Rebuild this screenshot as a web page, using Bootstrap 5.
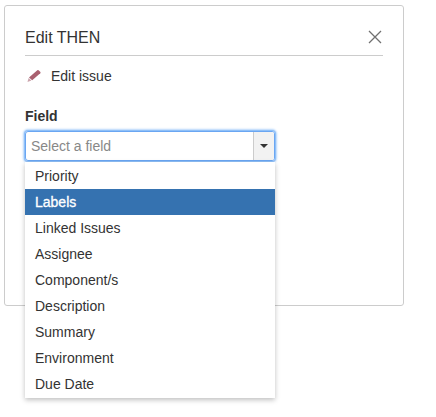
<!DOCTYPE html>
<html lang="en">
<head>
    <meta charset="UTF-8">
    <meta name="viewport" content="width=device-width, initial-scale=1.0">
    <title>Edit THEN</title>
    <link href="https://cdn.jsdelivr.net/npm/bootstrap@5.3.0/dist/css/bootstrap.min.css" rel="stylesheet">
    <style>
        body {
            background-color: #fff;
            color: #333;
            font-family: "Liberation Sans", Arial, sans-serif;
            font-size: 14px;
            line-height: 20px;
            padding: 5px 32px 0 4px;
        }

        .edit-panel {
            height: 301px;
            border: 1px solid #ccc;
            border-radius: 3px;
            padding: 20px 20px 0;
        }

        .panel-head {
            height: 30px;
            border-bottom: 1px solid #ccc;
        }

        .panel-title {
            font-size: 16px;
            line-height: 24px;
            margin: 0;
            font-weight: 400;
        }

        .close-icon {
            margin: -1px 1px 0 0;
        }

        .issue-line {
            margin-top: 10px;
            gap: 10px;
            padding-left: 2px;
        }

        .field-label {
            display: block;
            font-weight: 700;
            margin: 20px 0 5px;
        }

        .field-wrap {
            position: relative;
            width: 250px;
        }

        .field-box {
            height: 30px;
            border: 1px solid #6aa6f2;
            border-radius: 3px;
            box-shadow: 0 0 0 1px #8fc0f8, 0 0 2px 2px #b5d6fb;
        }

        .field-input {
            flex: 1;
            min-width: 0;
            border: 0;
            outline: 0;
            padding: 0 5px;
            font-size: 14px;
            color: #333;
            background: transparent;
        }

        .field-input::placeholder {
            color: #888;
            opacity: 1;
        }

        .field-caret {
            width: 21px;
            background-color: #f2f2f2;
            border-left: 1px solid #ccc;
            border-radius: 0 2px 2px 0;
        }

        .field-caret::after {
            content: "";
            border-top: 4px solid #333;
            border-left: 4px solid transparent;
            border-right: 4px solid transparent;
        }

        .field-options {
            position: absolute;
            top: 31px;
            left: 0;
            right: 0;
            background-color: #fff;
            border-radius: 0;
            box-shadow: 0 2px 5px rgba(0, 0, 0, 0.25);
            padding: 1px 0;
            z-index: 10;
        }

        .field-options .list-group-item {
            border: 0;
            border-radius: 0;
            height: 26px;
            padding: 3px 10px;
            color: #333;
            background-color: transparent;
        }

        .field-options .list-group-item.active {
            background-color: #3572b0;
            color: #fff;
            -webkit-text-stroke: 0.3px #fff;
            margin: 0;
        }
    </style>
</head>
<body class="min-vh-100">
    <div class="edit-panel">
        <div class="panel-head d-flex justify-content-between align-items-start">
            <h5 class="panel-title">Edit THEN</h5>
            <svg class="close-icon" width="14" height="24" viewBox="0 0 14 24" aria-label="Close">
                <path d="M1 6 L13 18 M13 6 L1 18" stroke="#707070" stroke-width="1.3" fill="none"/>
            </svg>
        </div>

        <div class="issue-line d-flex align-items-center">
            <svg width="14" height="14" viewBox="0 0 14 14" aria-hidden="true">
                <path d="M10.3 1.2 Q11 0.8 11.6 1.3 L13.4 3 Q13.8 3.6 13.3 4.2 L5.2 11.3 L2 8.4 Z" fill="#a9606f"/>
                <path d="M1.6 9 L4.4 11.6 L0.5 13 Z" fill="#cba5ad"/>
            </svg>
            <span>Edit issue</span>
        </div>

        <label class="field-label" for="fieldSelect">Field</label>
        <div class="field-wrap">
            <div class="field-box d-flex">
                <input type="text" id="fieldSelect" class="field-input" placeholder="Select a field">
                <span class="field-caret d-flex align-items-center justify-content-center"></span>
            </div>
            <div class="field-options list-group">
                <a class="list-group-item">Priority</a>
                <a class="list-group-item active">Labels</a>
                <a class="list-group-item">Linked Issues</a>
                <a class="list-group-item">Assignee</a>
                <a class="list-group-item">Component/s</a>
                <a class="list-group-item">Description</a>
                <a class="list-group-item">Summary</a>
                <a class="list-group-item">Environment</a>
                <a class="list-group-item">Due Date</a>
            </div>
        </div>
    </div>

    <script src="https://cdn.jsdelivr.net/npm/bootstrap@5.3.0/dist/js/bootstrap.bundle.min.js"></script>
</body>
</html>
